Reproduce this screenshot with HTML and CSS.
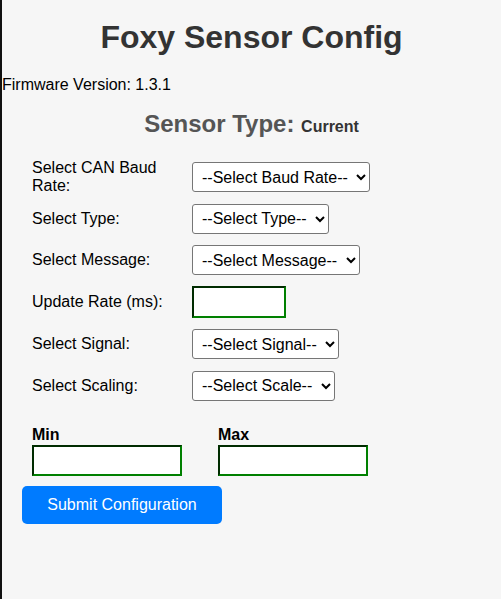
FILE: index.html
```html
<!DOCTYPE html>
<html>
<head>
<meta charset="utf-8">
<title>Foxy Sensor Config</title>
<link rel="stylesheet" href="styles.css">
</head>
<body>
<div class="page">
  <h1 class="title">Foxy Sensor Config</h1>
  <p class="firmware">Firmware Version: 1.3.1</p>
  <h2 class="sensor">Sensor Type: <span class="sensor-value">Current</span></h2>
  <form class="config">
    <div class="row">
      <label class="lbl" for="baud">Select CAN Baud Rate:</label>
      <select id="baud" class="sel"><option>--Select Baud Rate--</option></select>
    </div>
    <div class="row">
      <label class="lbl" for="type">Select Type:</label>
      <select id="type" class="sel"><option>--Select Type--</option></select>
    </div>
    <div class="row">
      <label class="lbl" for="msg">Select Message:</label>
      <select id="msg" class="sel"><option>--Select Message--</option></select>
    </div>
    <div class="row row-input">
      <label class="lbl" for="rate">Update Rate (ms):</label>
      <input id="rate" class="txt txt-rate" type="text">
    </div>
    <div class="row">
      <label class="lbl" for="sig">Select Signal:</label>
      <select id="sig" class="sel"><option>--Select Signal--</option></select>
    </div>
    <div class="row">
      <label class="lbl" for="scale">Select Scaling:</label>
      <select id="scale" class="sel"><option>--Select Scale--</option></select>
    </div>
    <div class="minmax">
      <div class="mm-col">
        <label class="mm-lbl" for="min">Min</label>
        <input id="min" class="txt txt-mm" type="text">
      </div>
      <div class="mm-col">
        <label class="mm-lbl" for="max">Max</label>
        <input id="max" class="txt txt-mm" type="text">
      </div>
    </div>
    <button type="button" class="submit">Submit Configuration</button>
  </form>
</div>
</body>
</html>
```

FILE: styles.css
```css
html, body {
  margin: 0;
  padding: 0;
  background: #f6f6f6;
}
body {
  font-family: "Liberation Sans", Arial, sans-serif;
  font-size: 16px;
  color: #000;
}
.page {
  border-left: 2px solid #111;
  min-height: 599px;
  box-sizing: border-box;
  overflow: hidden;
}
.title {
  margin: 19px 0 0;
  font-size: 32px;
  line-height: 37px;
  font-weight: bold;
  text-align: center;
  color: #333;
}
.firmware {
  margin: 20px 0 0;
  line-height: 18px;
}
.sensor {
  margin: 16px 0 0;
  font-size: 24px;
  line-height: 28px;
  font-weight: bold;
  text-align: center;
  color: #555;
}
.sensor-value {
  font-size: 16px;
  line-height: 16px;
  color: #333;
}
.config {
  margin: 24px 0 0;
  padding: 0 20px;
}
.row {
  display: flex;
  align-items: center;
  height: 30px;
  margin-bottom: 11.5px;
  padding-left: 10px;
}
.row-input {
  height: 31px;
}
.lbl {
  width: 150px;
  margin-right: 10px;
  line-height: 18px;
  flex: none;
}
.sel {
  height: 30px;
  box-sizing: border-box;
  font-family: "Liberation Sans", Arial, sans-serif;
  font-size: 16px;
  padding: 0 5px;
  border: 1px solid #767676;
  border-radius: 3px;
  background: #fff;
  color: #000;
}
.txt {
  box-sizing: border-box;
  height: 31.5px;
  border: 2px inset green;
  background: #fff;
  font-family: "Liberation Sans", Arial, sans-serif;
  font-size: 16px;
  padding: 4px 5px;
  margin: 0;
}
.txt-rate {
  width: 94px;
}
.minmax {
  display: flex;
  gap: 36px;
  padding-left: 10px;
  margin-top: 24px;
}
.mm-col {
  display: flex;
  flex-direction: column;
  width: 150px;
}
.mm-lbl {
  font-weight: bold;
  line-height: 20px;
}
.txt-mm {
  width: 150px;
}
.submit {
  display: block;
  margin-top: 10px;
  width: 200px;
  height: 38px;
  background: #007bff;
  color: #fff;
  border: none;
  border-radius: 5px;
  font-family: "Liberation Sans", Arial, sans-serif;
  font-size: 16px;
  padding: 0;
}
```
